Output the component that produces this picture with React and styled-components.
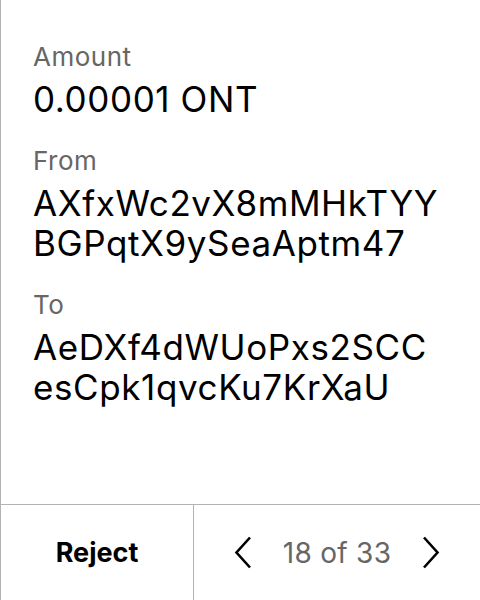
import React from "react";
import styled, { createGlobalStyle } from "styled-components";

const GlobalStyle = createGlobalStyle`
  html, body {
    margin: 0;
    padding: 0;
    background: #fff;
  }
  body {
    font-family: Inter, "Noto Sans", sans-serif;
  }
`;

const Container = styled.div`
  height: 600px;
  width: 480px;
  box-sizing: border-box;
  border-left: 1px solid #b3b3b3;
  display: flex;
  flex-direction: column;
  background: #fff;
`;
const Details = styled.div`
  flex: 1;
  padding: 41px 34px 0 32px;
  display: flex;
  flex-direction: column;
  gap: 26px;
`;
const Field = styled.div`
  display: flex;
  flex-direction: column;
  gap: 6px;
`;
const Label = styled.span`
  color: #666;
  font-size: 26px;
  line-height: 32px;
  letter-spacing: 0.5px;
`;
const Value = styled.span`
  color: #000;
  font-size: 35px;
  line-height: 40px;
  letter-spacing: 0.6px;
  word-break: break-all;
`;
const Footer = styled.div`
  height: 95px;
  border-top: 1px solid #b3b3b3;
  display: flex;
`;
const RejectButton = styled.div`
  width: 192px;
  border-right: 1px solid #b3b3b3;
  display: flex;
  align-items: center;
  justify-content: center;
  font-size: 27px;
  font-weight: 700;
  color: #000;
`;
const Pager = styled.div`
  flex: 1;
  display: flex;
  align-items: center;
  justify-content: center;
  gap: 31px;
`;
const PageText = styled.span`
  font-size: 28px;
  color: #666;
  letter-spacing: 0.3px;
`;
const Chevron = styled.svg`
  width: 18px;
  height: 33px;
`;

const App = () => {
  return (
    <Container>
      <GlobalStyle />
      <Details>
        <Field>
          <Label>Amount</Label>
          <Value>0.00001 ONT</Value>
        </Field>
        <Field>
          <Label>From</Label>
          <Value>AXfxWc2vX8mMHkTYYBGPqtX9ySeaAptm47</Value>
        </Field>
        <Field>
          <Label>To</Label>
          <Value>AeDXf4dWUoPxs2SCCesCpk1qvcKu7KrXaU</Value>
        </Field>
      </Details>
      <Footer>
        <RejectButton>Reject</RejectButton>
        <Pager>
          <Chevron viewBox="0 0 18 33">
            <polyline points="16,1.5 2.5,16.5 16,31.5" fill="none" stroke="#000" strokeWidth="2.6" />
          </Chevron>
          <PageText>18 of 33</PageText>
          <Chevron viewBox="0 0 18 33">
            <polyline points="2,1.5 15.5,16.5 2,31.5" fill="none" stroke="#000" strokeWidth="2.6" />
          </Chevron>
        </Pager>
      </Footer>
    </Container>
  );
};

export default App;
